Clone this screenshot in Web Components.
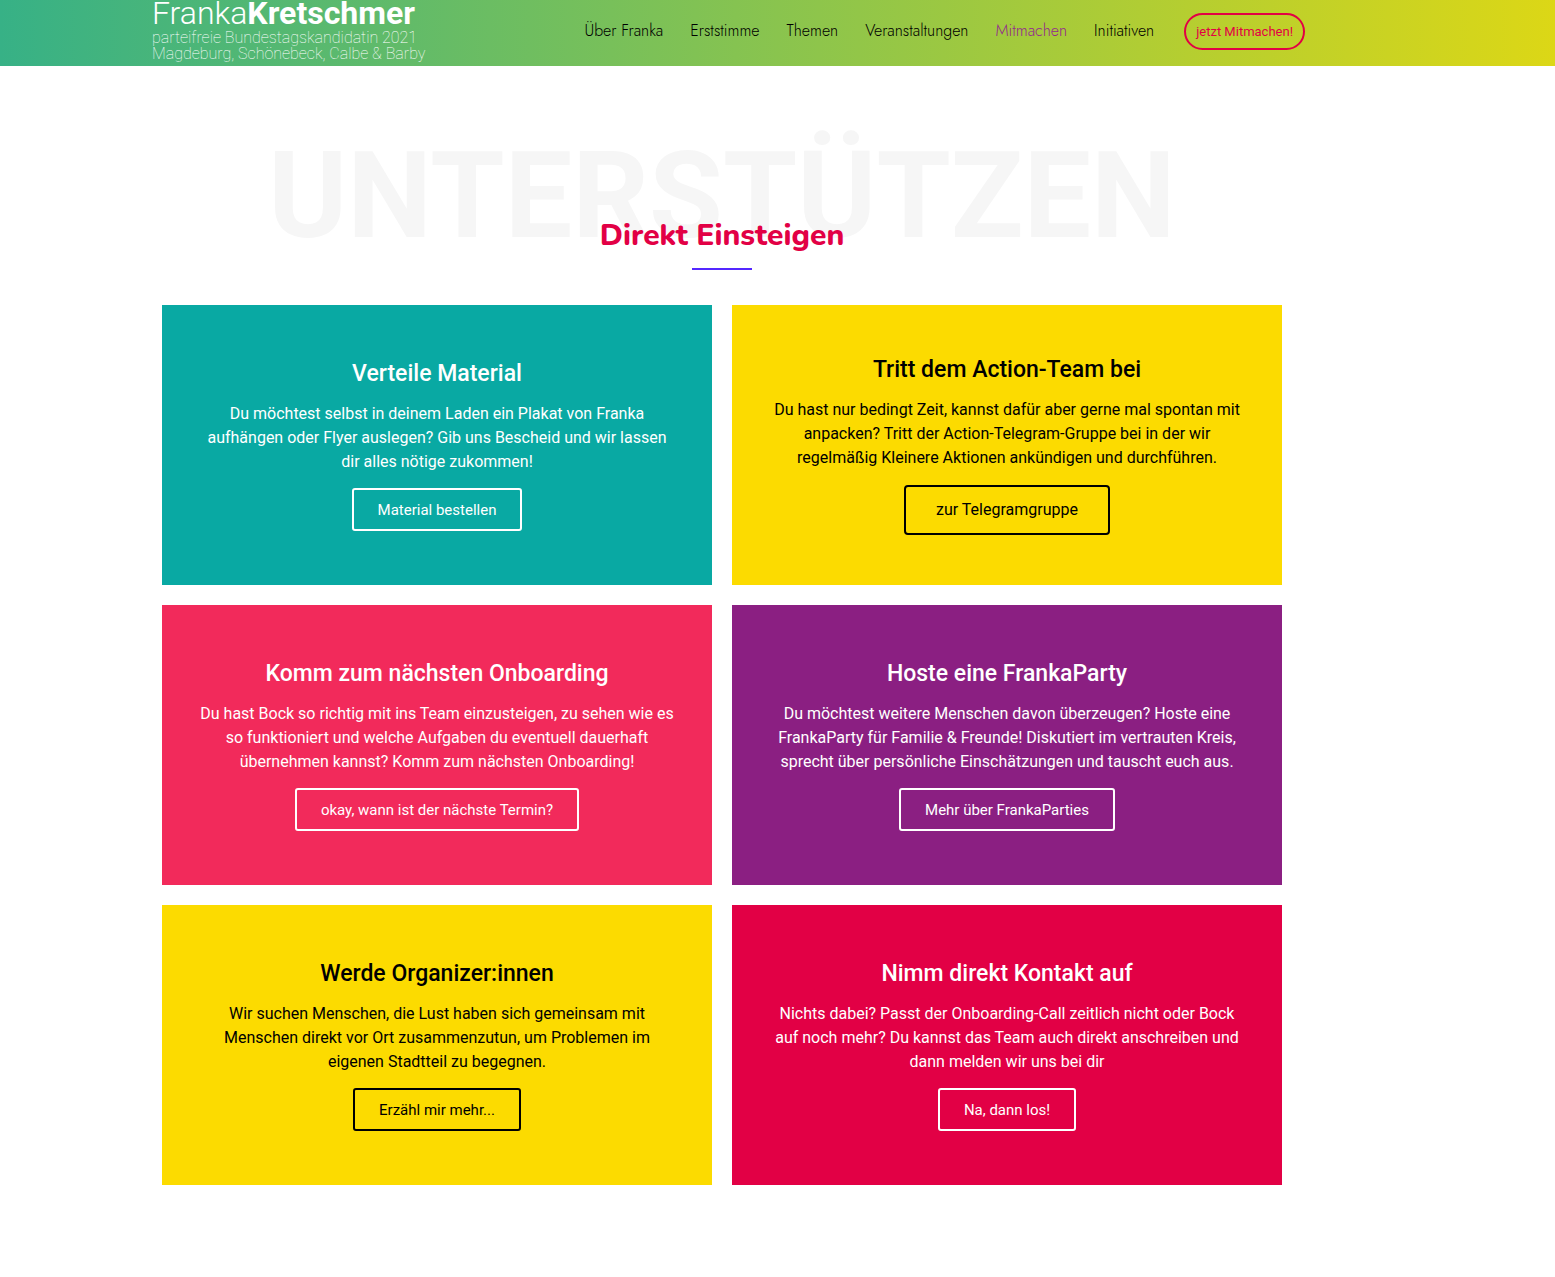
<!DOCTYPE html>
<html lang="de">
<head>
<meta charset="utf-8">
<meta name="viewport" content="width=device-width, initial-scale=1">
<title>Franka Kretschmer – Mitmachen</title>
<style>
  body { margin: 0; background: #fff; font-family: Roboto, "Liberation Sans", sans-serif; font-size: 16px; line-height: 24px; }
</style>
</head>
<body>
<site-header></site-header>
<main>
  <action-section watermark="UNTERSTÜTZEN" heading="Direkt Einsteigen">
    <action-card style="--bg:#09a9a3" heading="Verteile Material" action="Material bestellen">Du möchtest selbst in deinem Laden ein Plakat von Franka aufhängen oder Flyer auslegen? Gib uns Bescheid und wir lassen dir alles nötige zukommen!</action-card>
    <action-card size="large" style="--bg:#fcdb00;--fg:#000" heading="Tritt dem Action-Team bei" action="zur Telegramgruppe">Du hast nur bedingt Zeit, kannst dafür aber gerne mal spontan mit anpacken? Tritt der Action-Telegram-Gruppe bei in der wir regelmäßig Kleinere Aktionen ankündigen und durchführen.</action-card>
    <action-card style="--bg:#f22a5b" heading="Komm zum nächsten Onboarding" action="okay, wann ist der nächste Termin?">Du hast Bock so richtig mit ins Team einzusteigen, zu sehen wie es so funktioniert und welche Aufgaben du eventuell dauerhaft übernehmen kannst? Komm zum nächsten Onboarding!</action-card>
    <action-card style="--bg:#8b1f82" heading="Hoste eine FrankaParty" action="Mehr über FrankaParties">Du möchtest weitere Menschen davon überzeugen? Hoste eine FrankaParty für Familie &amp; Freunde! Diskutiert im vertrauten Kreis, sprecht über persönliche Einschätzungen und tauscht euch aus.</action-card>
    <action-card style="--bg:#fcdb00;--fg:#000" heading="Werde Organizer:innen" action="Erzähl mir mehr...">Wir suchen Menschen, die Lust haben sich gemeinsam mit Menschen direkt vor Ort zusammenzutun, um Problemen im eigenen Stadtteil zu begegnen.</action-card>
    <action-card style="--bg:#e20045" heading="Nimm direkt Kontakt auf" action="Na, dann los!">Nichts dabei? Passt der Onboarding-Call zeitlich nicht oder Bock auf noch mehr? Du kannst das Team auch direkt anschreiben und dann melden wir uns bei dir</action-card>
  </action-section>
</main>
<script>
class SiteHeader extends HTMLElement {
  connectedCallback() {
    this.attachShadow({ mode: 'open' }).innerHTML = `
      <style>
        :host { display: block; background: linear-gradient(90deg, #37b186, #dcd716); }
        header { box-sizing: border-box; padding-right: 111px; }
        .inner { display: flex; justify-content: space-between; max-width: 1140px; margin: 0 auto; }
        .brand { color: #fff; text-decoration: none; font-weight: 100; line-height: 16px; white-space: nowrap; padding-bottom: 4px; }
        .brand span { display: block; }
        .name { margin-bottom: 3px; font-size: 32px; line-height: 27px; font-weight: 300; }
        .name b { font-weight: 700; }
        .menu { display: flex; align-items: center; gap: 30px; margin-right: -13px; padding-bottom: 3px; white-space: nowrap; }
        nav { display: flex; gap: 27px; padding-bottom: 2px; font-family: Jost, Lato, sans-serif; font-weight: 300; }
        nav a { color: #000; text-decoration: none; }
        nav a[aria-current] { color: #93278f; }
        .join { box-sizing: border-box; height: 37px; padding: 0 10px; border: 2px solid #e20045; border-radius: 20px; background: none; color: #e20045; font: 400 13px/33px Roboto, sans-serif; }
      </style>
      <header><div class="inner">
        <a class="brand" href="#"><span class="name">Franka<b>Kretschmer</b></span><span>parteifreie Bundestagskandidatin 2021</span><span>Magdeburg, Schönebeck, Calbe &amp; Barby</span></a>
        <div class="menu">
          <nav aria-label="Hauptmenü">
            <a href="#">Über Franka</a><a href="#">Erststimme</a><a href="#">Themen</a><a href="#">Veranstaltungen</a><a href="#" aria-current="page">Mitmachen</a><a href="#">Initiativen</a>
          </nav>
          <button class="join" type="button">jetzt Mitmachen!</button>
        </div>
      </div></header>`;
  }
}
class ActionSection extends HTMLElement {
  connectedCallback() {
    this.attachShadow({ mode: 'open' }).innerHTML = `
      <style>
        :host { display: block; padding: 70px 111px 92px 0; }
        section { max-width: 1120px; margin: 0 auto; }
        .title { display: grid; justify-items: center; }
        .title > * { grid-area: 1 / 1; }
        .mark { color: #f6f6f6; font-size: 120px; line-height: 120px; font-weight: 700; }
        h2 { align-self: end; margin: 0; color: #e20045; font: 800 30px/40px Nunito, "Open Sans", sans-serif; }
        hr { width: 60px; height: 2px; margin: 12px auto 35px; border: 0; background: #5427ff; }
        .cards { display: grid; grid-template-columns: 1fr 1fr; gap: 20px; }
      </style>
      <section>
        <div class="title"><div class="mark"></div><h2></h2></div>
        <hr>
        <div class="cards"><slot></slot></div>
      </section>`;
    this.shadowRoot.querySelector('.mark').textContent = this.getAttribute('watermark');
    this.shadowRoot.querySelector('h2').textContent = this.getAttribute('heading');
  }
}
class ActionCard extends HTMLElement {
  connectedCallback() {
    this.attachShadow({ mode: 'open' }).innerHTML = `
      <style>
        :host { display: flex; flex-direction: column; align-items: center; justify-content: center; box-sizing: border-box; min-height: 280px; padding: 35px; background: var(--bg); color: var(--fg, #fff); text-align: center; }
        h3 { margin: 0 0 14px; font-size: 23px; line-height: 29px; font-weight: 500; }
        p { margin: 0 0 14px; }
        a { padding: 13px 24px 11px; border: 2px solid; border-radius: 3px; color: inherit; text-decoration: none; font-size: 15px; line-height: 15px; }
        :host([size=large]) p { margin-bottom: 15px; }
        :host([size=large]) a { padding: 15px 30px; border-radius: 4px; font-size: 16px; line-height: 16px; }
      </style>
      <h3></h3><p><slot></slot></p><a href="#"></a>`;
    this.shadowRoot.querySelector('h3').textContent = this.getAttribute('heading');
    this.shadowRoot.querySelector('a').textContent = this.getAttribute('action');
  }
}
customElements.define('site-header', SiteHeader);
customElements.define('action-section', ActionSection);
customElements.define('action-card', ActionCard);
</script>
</body>
</html>
